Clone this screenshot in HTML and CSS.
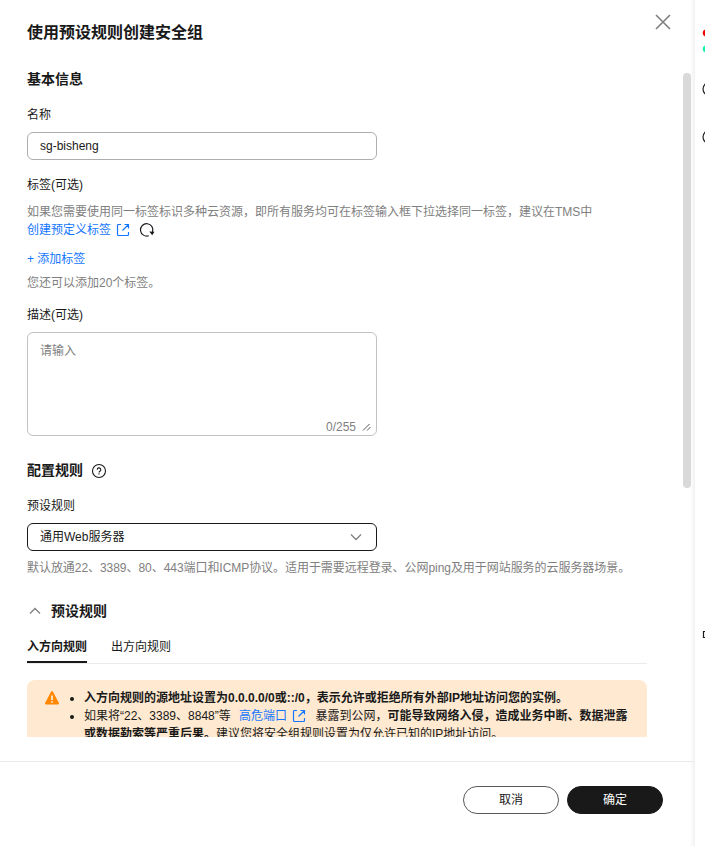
FILE: index.html
```
<!doctype html>
<html lang="zh-CN">
  <head>
    <meta charset="UTF-8" />
    <meta name="viewport" content="width=device-width, initial-scale=1.0" />
    <title>使用预设规则创建安全组</title>
    <link rel="stylesheet" href="styles.css">
  </head>
  <body>
    <div class="page">
      <div class="drawer">
        <div class="header">
          <h1>使用预设规则创建安全组</h1>
          <svg class="close" width="16" height="16" viewBox="0 0 16 16">
            <path d="M1 1l14 14M15 1L1 15" />
          </svg>
        </div>
        <div class="content">
          <h2>基本信息</h2>
          <div class="label">名称</div>
          <div class="input">sg-bisheng</div>

          <div class="label tag-label">标签(可选)</div>
          <div class="hint tag-hint">
            <div>如果您需要使用同一标签标识多种云资源，即所有服务均可在标签输入框下拉选择同一标签，建议在TMS中</div>
            <div class="link-row">
              <a class="link">创建预定义标签</a>
              <svg class="external" width="14" height="14" viewBox="0 0 14 14">
                <path d="M5 1.500H2.500a1 1 0 0 0-1 1v9a1 1 0 0 0 1 1h9a1 1 0 0 0 1-1V9M8.500 1.500h4v4M12.500 1.500L6.500 7.500" />
              </svg>
              <svg class="refresh" width="16" height="16" viewBox="0 0 16 16">
                <path d="M9.800 13.700A6.200 6.200 0 1 1 13.500 10" />
                <path class="tip" d="M10.300 9.500L15.500 9.800L13.200 13.200Z" />
              </svg>
            </div>
          </div>
          <a class="link add">+ 添加标签</a>
          <div class="hint">您还可以添加20个标签。</div>

          <div class="label desc-label">描述(可选)</div>
          <div class="textarea">
            <span>请输入</span>
            <div class="counter">
              0/255
              <svg width="10" height="10" viewBox="0 0 10 10">
                <path d="M1 8.500L7.500 2M5 8.500L8.500 5" />
              </svg>
            </div>
          </div>

          <h2 class="rules-title">
            配置规则
            <svg class="help" width="16" height="16" viewBox="0 0 16 16">
              <circle cx="8" cy="8" r="6.500" />
              <path d="M6.200 6.700a1.800 1.800 0 1 1 2.700 1.500c-.6.4-.9.600-.9 1.200" />
              <path d="M8 10.300v1.200" />
            </svg>
          </h2>
          <div class="label">预设规则</div>
          <div class="input select">
            通用Web服务器
            <svg class="chevron" width="12" height="8" viewBox="0 0 12 8">
              <path d="M1 1.500l5 5 5-5" />
            </svg>
          </div>
          <div class="hint select-hint">默认放通22、3389、80、443端口和ICMP协议。适用于需要远程登录、公网ping及用于网站服务的云服务器场景。</div>

          <div class="collapse">
            <svg class="chevron" width="12" height="8" viewBox="0 0 12 8">
              <path d="M1 6.500l5-5 5 5" />
            </svg>
            <h2>预设规则</h2>
          </div>
          <div class="tabs">
            <div class="tab active">入方向规则</div>
            <div class="tab">出方向规则</div>
          </div>

          <div class="alert">
            <svg class="warning" width="16" height="16" viewBox="0 0 16 16">
              <path d="M7.100 1.500a1 1 0 0 1 1.800 0l6 11.500a1 1 0 0 1-.9 1.500H2a1 1 0 0 1-.9-1.500z" fill="#ff8800" />
              <path d="M8 5.500v4.500M8 11.200v1.600" stroke="#fff" stroke-width="1.500" />
            </svg>
            <ul>
              <li><b class="source">入方向规则的源地址设置为0.0.0.0/0或::/0，表示允许或拒绝所有外部IP地址访问您的实例。</b></li>
              <li>
                如果将“22、3389、8848”等
                <a class="link port">高危端口<svg class="external" width="14" height="14" viewBox="0 0 14 14">
                  <path d="M5 1.500H2.500a1 1 0 0 0-1 1v9a1 1 0 0 0 1 1h9a1 1 0 0 0 1-1V9M8.500 1.500h4v4M12.500 1.500L6.500 7.500" />
                </svg></a>
                暴露到公网，<b>可能导致网络入侵，造成业务中断、数据泄露<br>或数据勒索等严重后果。</b>建议您将安全组规则设置为仅允许已知的IP地址访问。
              </li>
            </ul>
          </div>
        </div>
        <div class="footer">
          <button>取消</button>
          <button class="primary">确定</button>
        </div>
        <div class="scrollbar"></div>
      </div>
      <div class="rail">
        <svg width="10" height="846" viewBox="0 0 10 846">
          <circle cx="11.500" cy="33" r="3.800" fill="#f00000" />
          <circle cx="11.500" cy="49" r="3.800" fill="#13f0b0" />
          <circle cx="14.500" cy="89" r="6.500" class="ring" />
          <circle cx="14.500" cy="137" r="6.500" class="ring" />
          <path d="M10 631.500H8.500v6H10" class="ring" />
        </svg>
      </div>
    </div>
  </body>
</html>
```
FILE: styles.css
```
* {
  box-sizing: border-box;
}

body {
  margin: 0;
  font-family: "Liberation Sans", "Noto Sans CJK SC", sans-serif;
  font-size: 12px;
  line-height: 18px;
  color: #191919;
  background-color: #fff;
}

h1,
h2 {
  margin: 0;
  font-weight: 700;
}
h1 {
  font-size: 16px;
  line-height: 24px;
}
h2 {
  font-size: 14px;
  line-height: 20px;
}

svg {
  display: block;
  flex: none;
  fill: none;
}

.page {
  display: flex;
  height: 846px;
  overflow: hidden;
}
.drawer {
  position: relative;
  width: 695px;
  display: flex;
  flex-direction: column;
  background: linear-gradient(to left, #f1f1f1, #fff 5px);
}
.rail {
  width: 10px;
}
.ring {
  stroke: #191919;
  stroke-width: 1.2;
}

.header {
  height: 64px;
  padding: 13px 24px 0 27px;
  display: flex;
  justify-content: space-between;
  align-items: flex-start;
}
.header h1 {
  margin-top: 8px;
}
.close {
  margin-top: 1px;
  stroke: #808080;
  stroke-width: 1.6;
}

.content {
  height: 673px;
  padding: 5px 48px 0 27px;
  overflow: hidden;
  white-space: nowrap;
}
.label {
  margin: 17px 0 8px;
}
.tag-label {
  margin-top: 16px;
}
.desc-label {
  margin-top: 14px;
}
.input {
  width: 350px;
  height: 28px;
  padding: 0 12px;
  display: flex;
  align-items: center;
  justify-content: space-between;
  border: 1px solid #aeaeae;
  border-radius: 6px;
}
.select {
  border-color: #191919;
  padding-right: 14px;
}
.chevron {
  stroke: #808080;
  stroke-width: 1.3;
}
.hint {
  color: #808080;
}
.tag-hint {
  padding-top: 1px;
}
.select-hint {
  margin-top: 8px;
  letter-spacing: -0.05px;
}

.link {
  color: #1476ff;
}
.link-row {
  display: flex;
  align-items: center;
}
.external {
  stroke: #1476ff;
  stroke-width: 1.2;
  margin-left: 5px;
}
.refresh {
  margin-left: 9px;
  stroke: #191919;
  stroke-width: 1.1;
}
.refresh .tip {
  fill: #191919;
  stroke: none;
}
.add {
  display: block;
  margin: 11px 0 6px;
}

.textarea {
  width: 350px;
  height: 104px;
  padding: 9px 4px 0 12px;
  display: flex;
  flex-direction: column;
  justify-content: space-between;
  border: 1px solid #c2c2c2;
  border-radius: 6px;
  color: #808080;
}
.counter {
  display: flex;
  align-items: center;
  justify-content: flex-end;
  gap: 6px;
  line-height: 16px;
}
.counter svg {
  stroke: #595959;
}

.rules-title {
  margin-top: 24px;
  display: flex;
  align-items: center;
  gap: 8px;
}
.help {
  margin-top: 1px;
  stroke: #191919;
  stroke-width: 1.1;
}

.collapse {
  margin-top: 24px;
  padding-left: 2px;
  display: flex;
  align-items: center;
  gap: 10px;
}
.tabs {
  height: 43px;
  padding-top: 17px;
  display: flex;
  gap: 24px;
  border-bottom: 1px solid #ebebeb;
}
.tab {
  height: 25px;
}
.tab.active {
  font-weight: 700;
  border-bottom: 2px solid #191919;
}

.alert {
  height: 80px;
  margin-top: 16px;
  padding: 9px 16px 0 17px;
  display: flex;
  border-radius: 8px;
  background-color: #ffead1;
}
.alert ul {
  margin: 0;
  padding-left: 24px;
}
.warning {
  margin-top: 1px;
}
.port {
  margin: 0 6px 0 5px;
}
.port .external {
  display: inline-block;
  vertical-align: -3px;
}

.footer {
  height: 85px;
  margin-top: 24px;
  padding: 24px 32px 0 0;
  display: flex;
  justify-content: flex-end;
  gap: 8px;
  border-top: 1px solid #ebebeb;
}
.footer button {
  width: 96px;
  height: 28px;
  padding: 0;
  border: 1px solid #595959;
  border-radius: 14px;
  background-color: #fff;
  color: #191919;
  font: inherit;
}
.footer .primary {
  border-color: #191919;
  background-color: #191919;
  color: #fff;
}

.scrollbar {
  position: absolute;
  top: 73px;
  right: 4px;
  width: 8px;
  height: 415px;
  border-radius: 4px;
  background-color: #d9d9d9;
}
```
